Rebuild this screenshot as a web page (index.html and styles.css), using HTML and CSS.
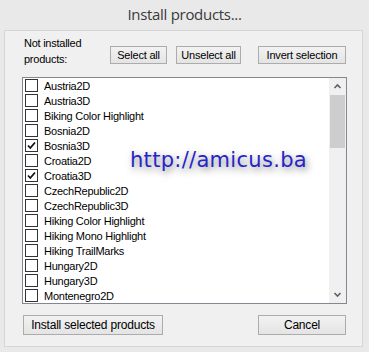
FILE: index.html
```html
<!DOCTYPE html>
<html>
<head>
<meta charset="utf-8">
<link rel="stylesheet" href="styles.css">
</head>
<body>
<div class="title">Install products...</div>
<div class="panel">
  <div class="header">
    <div class="label">Not installed<br>products:</div>
    <button class="btn b-sel">Select all</button>
    <button class="btn b-unsel">Unselect all</button>
    <button class="btn b-inv">Invert selection</button>
  </div>
  <div class="list">
    <div class="items">
      <div class="row"><span class="cb"></span>Austria2D</div>
      <div class="row"><span class="cb"></span>Austria3D</div>
      <div class="row"><span class="cb"></span>Biking Color Highlight</div>
      <div class="row"><span class="cb"></span>Bosnia2D</div>
      <div class="row"><span class="cb on"><svg viewBox="0 0 13 13" width="13" height="13"><path d="M3 6.5 L5.3 9 L10 3.5" fill="none" stroke="#111" stroke-width="1.8"/></svg></span>Bosnia3D</div>
      <div class="row"><span class="cb"></span>Croatia2D</div>
      <div class="row"><span class="cb on"><svg viewBox="0 0 13 13" width="13" height="13"><path d="M3 6.5 L5.3 9 L10 3.5" fill="none" stroke="#111" stroke-width="1.8"/></svg></span>Croatia3D</div>
      <div class="row"><span class="cb"></span>CzechRepublic2D</div>
      <div class="row"><span class="cb"></span>CzechRepublic3D</div>
      <div class="row"><span class="cb"></span>Hiking Color Highlight</div>
      <div class="row"><span class="cb"></span>Hiking Mono Highlight</div>
      <div class="row"><span class="cb"></span>Hiking TrailMarks</div>
      <div class="row"><span class="cb"></span>Hungary2D</div>
      <div class="row"><span class="cb"></span>Hungary3D</div>
      <div class="row"><span class="cb"></span>Montenegro2D</div>
    </div>
    <div class="scrollbar">
      <div class="arrow"><svg viewBox="0 0 17 17" width="17" height="17"><path d="M5.5 10 L8.5 7 L11.5 10" fill="none" stroke="#606060" stroke-width="1.6"/></svg></div>
      <div class="track"><div class="thumb"></div></div>
      <div class="arrow"><svg viewBox="0 0 17 17" width="17" height="17"><path d="M5.5 7 L8.5 10 L11.5 7" fill="none" stroke="#606060" stroke-width="1.6"/></svg></div>
    </div>
    <div class="watermark">http://amicus.ba</div>
  </div>
  <div class="footer">
    <button class="btn b-install">Install selected products</button>
    <button class="btn b-cancel">Cancel</button>
  </div>
</div>
</body>
</html>
```

FILE: styles.css
```css
html, body {
  margin: 0;
  padding: 0;
}
body {
  width: 369px;
  height: 352px;
  background: #e9e9e9;
  font-family: "Liberation Sans", Arial, sans-serif;
  font-size: 11px;
  letter-spacing: -0.25px;
  color: #000;
  overflow: hidden;
}
.title {
  height: 30px;
  line-height: 29px;
  text-align: center;
  font-family: "Open Sans", "Noto Sans", sans-serif;
  font-size: 15px;
  letter-spacing: -0.3px;
  color: #3a3a3a;
}
.panel {
  margin: 0 6px 0 4px;
  height: 317px;
  background: #f0f0f0;
  border: 1px solid #d6d6d6;
  padding: 0 16px 0 17px;
  box-sizing: border-box;
}
.header {
  display: flex;
  align-items: flex-end;
  height: 46px;
  box-sizing: border-box;
}
.label {
  align-self: flex-start;
  margin-top: 4px;
  margin-left: 2px;
  width: 86px;
  line-height: 16px;
}
.btn {
  font-family: "Liberation Sans", Arial, sans-serif;
  font-size: 11px;
  letter-spacing: -0.2px;
  color: #000;
  background: linear-gradient(#f2f2f2, #e4e4e4);
  border: 1px solid #acacac;
  border-radius: 0;
  padding: 0;
  height: 18px;
  margin-bottom: 13px;
}
.b-sel { width: 57px; }
.b-unsel { width: 65px; margin-left: 9px; }
.b-inv { width: 88px; margin-left: 17px; }
.list {
  position: relative;
  height: 227px;
  width: 325px;
  box-sizing: border-box;
  border: 1px solid #828790;
  background: #fff;
  display: flex;
}
.items {
  flex: 1;
  padding-left: 2px;
}
.row {
  height: 15px;
  display: flex;
  align-items: center;
  white-space: nowrap;
}
.cb {
  width: 13px;
  height: 13px;
  box-sizing: border-box;
  border: 1px solid #333;
  background: #fff;
  margin-right: 6px;
  position: relative;
}
.cb svg {
  position: absolute;
  left: -1px;
  top: -1px;
}
.scrollbar {
  width: 17px;
  background: #f0f0f0;
  display: flex;
  flex-direction: column;
}
.arrow {
  height: 17px;
}
.arrow svg { display: block; }
.track {
  flex: 1;
  padding: 0 1px;
}
.thumb {
  height: 53px;
  background: #cdcdcd;
}
.watermark {
  position: absolute;
  left: 107px;
  top: 70px;
  font-family: "DejaVu Sans", sans-serif;
  font-size: 21px;
  letter-spacing: 0.3px;
  color: #2626c8;
  text-shadow: 2px 3px 7px rgba(0, 0, 0, 0.5);
}
.footer {
  display: flex;
  justify-content: space-between;
  width: 324px;
  margin-top: 11px;
}
.footer .btn {
  height: 20px;
  font-size: 12px;
  margin-bottom: 0;
}
.b-install { width: 140px; margin-left: 1px; }
.b-cancel { width: 88px; }
```
